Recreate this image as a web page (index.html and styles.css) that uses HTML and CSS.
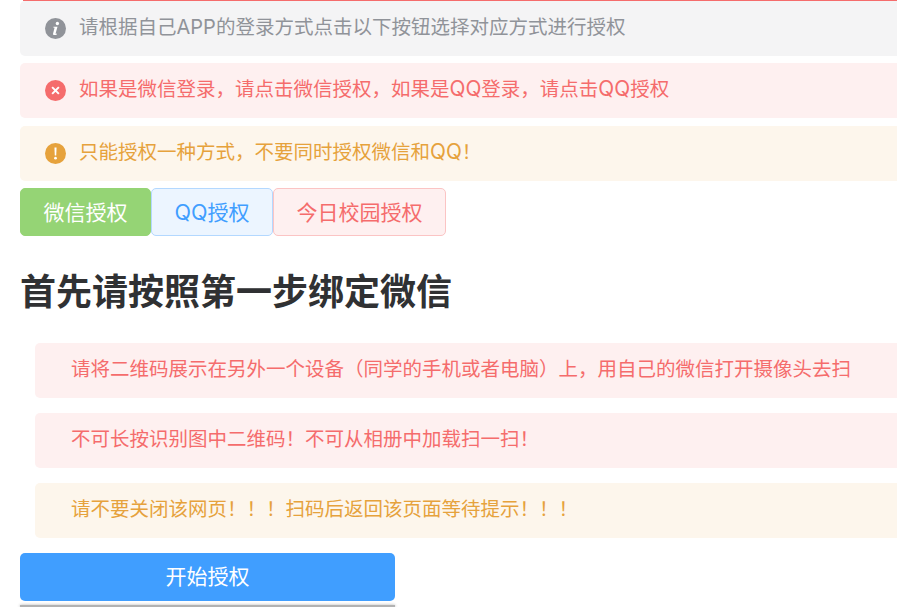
FILE: index.html
```html
<!DOCTYPE html>
<html lang="zh-CN">
<head>
<meta charset="utf-8">
<title>授权</title>
<link rel="stylesheet" href="styles.css">
</head>
<body>
<div class="page">
  <div class="prev-edge"></div>
  <div class="alert alert-info">
    <svg class="alert-icon" viewBox="0 0 20 20"><circle cx="10" cy="10" r="10" fill="#909399"/><circle cx="11.8" cy="5.2" r="1.600" fill="#fff"/><path d="M8 8.300h3.900l-1.800 6.400c-.1.500.4.500 1.300 0l-.1.900c-1.800 1-4.100 1-3.600-.9l1.400-5.300-1.200-.3z" fill="#fff"/></svg>
    <span class="alert-text">请根据自己<span class="app">APP</span>的登录方式点击以下按钮选择对应方式进行授权</span>
  </div>
  <div class="alert alert-error">
    <svg class="alert-icon" viewBox="0 0 20 20"><circle cx="10" cy="10" r="10" fill="#f56c6c"/><path d="M6.800 6.800l6.400 6.400M13.200 6.800l-6.400 6.400" stroke="#fff" stroke-width="1.900"/></svg>
    <span class="alert-text">如果是微信登录，请点击微信授权，如果是<span class="qq">QQ</span>登录，请点击<span class="qq">QQ</span>授权</span>
  </div>
  <div class="alert alert-warning">
    <svg class="alert-icon" viewBox="0 0 20 20"><circle cx="10" cy="10" r="10" fill="#e6a23c"/><path d="M9 4.200h2l-.3 7.600H9.300z" fill="#fff"/><circle cx="10" cy="14.500" r="1.300" fill="#fff"/></svg>
    <span class="alert-text">只能授权一种方式，不要同时授权微信和<span class="qq">QQ</span>！</span>
  </div>
  <div class="btn-row">
    <button class="btn btn-success">微信授权</button>
    <button class="btn btn-primary-plain"><span class="qq-btn">QQ</span>授权</button>
    <button class="btn btn-danger-plain">今日校园授权</button>
  </div>
  <h1 class="title">首先请按照第一步绑定微信</h1>
  <ul class="steps">
    <li class="step step-error">请将二维码展示在另外一个设备（同学的手机或者电脑）上，用自己的微信打开摄像头去扫</li>
    <li class="step step-error">不可长按识别图中二维码！不可从相册中加载扫一扫！</li>
    <li class="step step-warning">请不要关闭该网页！！！扫码后返回该页面等待提示！！！</li>
  </ul>
  <button class="btn-start">开始授权</button>
  <div class="next-edge"></div>
</div>
</body>
</html>
```

FILE: styles.css
```css
html, body {
  margin: 0;
  padding: 0;
  height: 607px;
  overflow: hidden;
  background: #fff;
}
body {
  font-family: "Inter", "Noto Sans CJK SC", "Liberation Sans", sans-serif;
}
.page {
  padding-left: 20px;
  margin-right: -12px;
  display: flex;
  flex-direction: column;
}
.prev-edge {
  height: 1px;
  background: #f56c6c;
  margin-left: 3px;
}
.alert {
  height: 55px;
  box-sizing: border-box;
  display: flex;
  align-items: center;
  gap: 13px;
  padding-left: 25px;
  border-radius: 5px;
  font-size: 19.5px;
}
.alert + .alert { margin-top: 7.4px; }
.alert-text { margin-bottom: 3px; line-height: 28px; }
.app { font-size: 20px; }
.qq { font-size: 20.8px; }
.qq-btn { font-size: 21.6px; }
.alert-icon { width: 21px; height: 21px; flex: none; }
.alert-info { background: #f4f4f5; color: #909399; }
.alert-error { background: #fef0f0; color: #f56c6c; }
.alert-warning { background: #fdf6ec; color: #e6a23c; }
.btn-row {
  display: flex;
  margin-top: 7.2px;
}
.btn {
  height: 48px;
  box-sizing: border-box;
  padding: 0 22.5px 2px;
  border: 1px solid;
  border-radius: 5px;
  font: inherit;
  font-size: 21px;
}
.btn-success { background: #95d475; border-color: #95d475; color: #fff; }
.btn-primary-plain { background: #ecf5ff; border-color: #b3d8ff; color: #409eff; }
.btn-danger-plain { background: #fef0f0; border-color: #fbc4c4; color: #f56c6c; }
.title {
  margin: 29px 0 0;
  font-size: 36px;
  line-height: 54px;
  font-weight: 700;
  color: #303133;
}
.steps {
  list-style: none;
  margin: 24px 0 0;
  padding: 0 0 0 15px;
  display: flex;
  flex-direction: column;
  gap: 15px;
}
.step {
  height: 55px;
  box-sizing: border-box;
  display: flex;
  align-items: center;
  padding: 0 0 6px 36px;
  border-radius: 5px;
  font-size: 19.5px;
}
.step-error { background: #fef0f0; color: #f56c6c; }
.step-warning { background: #fdf6ec; color: #e6a23c; }
.btn-start {
  display: block;
  flex: none;
  width: 375px;
  height: 48px;
  margin-top: 15px;
  padding: 0 0 3px;
  border: 0;
  border-radius: 5px;
  background: #409eff;
  color: #fff;
  font: inherit;
  font-size: 21px;
}
.next-edge {
  flex: none;
  width: 375px;
  height: 2px;
  margin-top: 4px;
  background: rgba(0, 0, 0, 0.3);
  box-shadow: 0 0 3px rgba(0, 0, 0, 0.35);
}
```
